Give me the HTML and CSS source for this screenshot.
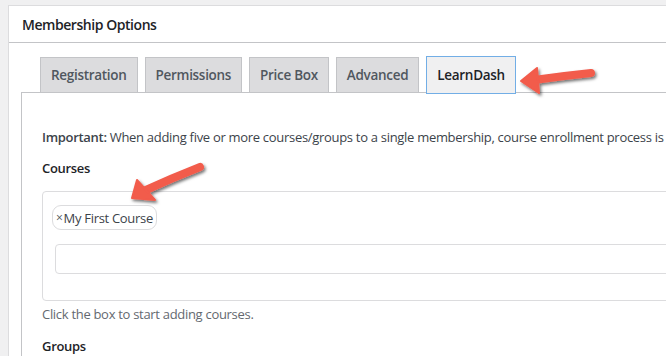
FILE: index.html
```html
<!DOCTYPE html>
<html>
<head>
<meta charset="utf-8">
<link rel="stylesheet" href="styles.css">
</head>
<body>
<div class="panel">
  <div class="panel-head">Membership Options</div>
  <div class="panel-body">
    <div class="tabs">
      <div class="tab">Registration</div>
      <div class="tab">Permissions</div>
      <div class="tab">Price Box</div>
      <div class="tab">Advanced</div>
      <div class="tab active">LearnDash</div>
    </div>
    <div class="content">
      <p class="notice"><strong>Important:</strong> When adding five or more courses/groups to a single membership, course enrollment process is done in the background</p>
      <div class="label">Courses</div>
      <div class="select">
        <div class="chips"><span class="chip"><span class="x">×</span>My First Course</span></div>
        <div class="input"></div>
      </div>
      <p class="help">Click the box to start adding courses.</p>
      <div class="label groups">Groups</div>
    </div>
  </div>
</div>
<svg class="arrows" width="666" height="356" viewBox="0 0 666 356">
  <defs>
    <filter id="sh" x="-20%" y="-20%" width="140%" height="160%">
      <feDropShadow dx="1.5" dy="2" stdDeviation="1.5" flood-color="#000" flood-opacity="0.55"/>
    </filter>
  </defs>
  <g filter="url(#sh)" fill="#f25b4c" stroke="#f25b4c">
    <path d="M534 80 Q562 76 591 73" fill="none" stroke-width="8" stroke-linecap="round"/>
    <polygon points="521,81 537,68 539,93" stroke-width="2" stroke-linejoin="round"/>
    <path d="M146 190 Q172 178 200 167" fill="none" stroke-width="8" stroke-linecap="round"/>
    <polygon points="132,198 137,180 155,200" stroke-width="2" stroke-linejoin="round"/>
  </g>
</svg>
</body>
</html>
```
FILE: styles.css
```css
html, body {
  margin: 0;
  padding: 0;
}
body {
  background: #f0f0f1;
  overflow: hidden;
  width: 666px;
  height: 356px;
  font-family: "Open Sans", "Noto Sans", sans-serif;
  font-size: 13px;
  color: #3c434a;
  letter-spacing: -0.3px;
}
.panel {
  margin: 5px 0 0 8px;
  width: 720px;
  height: 400px;
  background: #fff;
  border: 1px solid #dcdcde;
}
.panel-head {
  height: 36px;
  border-bottom: 1px solid #c3c4c7;
  padding-left: 13px;
  display: flex;
  align-items: center;
  font-weight: 600;
  font-size: 14px;
  letter-spacing: -0.45px;
  color: #1d2327;
}
.panel-body {
  padding: 14px 0 0 12px;
}
.tabs {
  display: flex;
  align-items: flex-end;
  gap: 7px;
  padding-left: 19px;
  height: 35px;
}
.tab {
  height: 34px;
  line-height: 34px;
  padding: 0 10px;
  background: #dcdcde;
  border: 1px solid #c3c4c7;
  border-bottom: none;
  font-weight: 600;
  font-size: 13.5px;
  letter-spacing: -0.3px;
  color: #50575e;
}
.tab.active {
  height: 36px;
  line-height: 36px;
  background: #f0f0f1;
  border: 1px solid #72aee6;
  color: #1d2327;
  margin-bottom: -2px;
  position: relative;
  z-index: 1;
}
.content {
  border-top: 1px solid #c3c4c7;
  border-left: 1px solid #c3c4c7;
  padding: 34px 0 0 20px;
  white-space: nowrap;
}
.notice {
  margin: 0;
  line-height: 20px;
}
.notice strong {
  font-weight: 600;
}
.label {
  margin-top: 11px;
  line-height: 20px;
  font-weight: 600;
  color: #1d2327;
}
.select {
  margin-top: 13px;
  border: 1px solid #dcdcde;
  border-radius: 4px;
  padding: 13px 0 0 9px;
  box-sizing: border-box;
  height: 110px;
}
.chips {
  display: flex;
}
.chip {
  display: inline-flex;
  align-items: center;
  height: 23px;
  padding: 0 3px;
  border: 1px solid #dcdcde;
  border-radius: 9px;
  color: #3c434a;
  font-size: 13px;
}
.chip .x {
  color: #50575e;
  font-size: 12px;
  margin-right: 1px;
}
.input {
  margin: 14px 0 0 3px;
  height: 28px;
  border: 1px solid #dcdcde;
  border-radius: 4px;
}
.help {
  margin: 3px 0 0;
  line-height: 20px;
  color: #646970;
}
.label.groups {
  margin-top: 12px;
}
.arrows {
  position: absolute;
  left: 0;
  top: 0;
  pointer-events: none;
}
```
